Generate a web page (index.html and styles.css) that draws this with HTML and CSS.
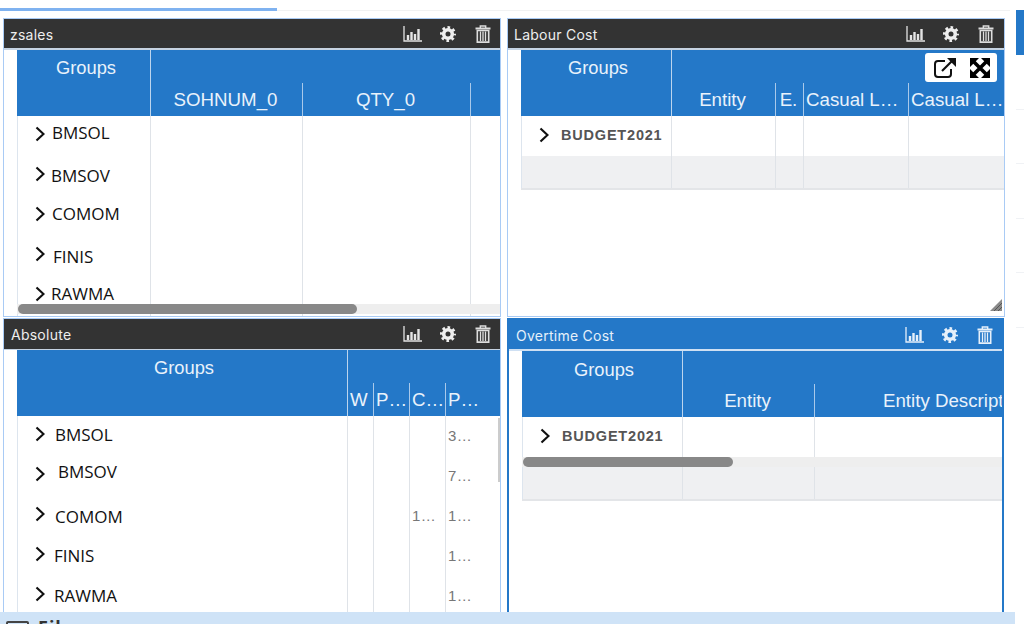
FILE: index.html
```html
<!DOCTYPE html>
<html lang="en">
<head>
<meta charset="utf-8">
<title>Dashboard</title>
<link rel="stylesheet" href="styles.css">
</head>
<body>
<svg class="defs" width="0" height="0" aria-hidden="true">
  <symbol id="chart" viewBox="0 0 19 16">
    <path d="M1 0v15h18" fill="none" stroke="currentColor" stroke-width="1.300"/>
    <path d="M3.800 9h2.400v5H3.800zM7.300 6h2.400v8H7.300zM10.800 8h2.400v6h-2.400zM14.300 3h2.400v11h-2.400z" fill="currentColor"/>
  </symbol>
  <symbol id="gear" viewBox="0 0 16 16">
    <circle cx="8" cy="8" r="4.300" fill="none" stroke="currentColor" stroke-width="3.600"/>
    <circle cx="8" cy="8" r="6.500" fill="none" stroke="currentColor" stroke-width="3" stroke-dasharray="2.550 2.555" stroke-dashoffset="1.275"/>
  </symbol>
  <symbol id="trash" viewBox="0 0 16 18">
    <path d="M.5 3.500h15" fill="none" stroke="currentColor" stroke-width="2"/>
    <path d="M5.300 3V1h5.400v2" fill="none" stroke="currentColor" stroke-width="1.400"/>
    <path d="M2.300 5.500h11.400v11.600H2.300z" fill="none" stroke="currentColor" stroke-width="1.600"/>
    <path d="M5.500 6.500v9.500M8 6.500v9.500M10.500 6.500v9.500" fill="none" stroke="currentColor" stroke-width="1.300"/>
  </symbol>
  <symbol id="chev" viewBox="0 0 10 16">
    <path d="M1.500 1.500l7 6.500-7 6.500" fill="none" stroke="currentColor" stroke-width="2.200"/>
  </symbol>
</svg>
<div class="shell">
  <main class="main">
    <div class="topbar"><div class="progress"></div></div>
    <div class="board">

      <section class="panel">
        <header class="phead">
          <span class="ptitle">zsales</span>
          <span class="ptools">
            <svg class="i-chart"><use href="#chart"/></svg>
            <svg class="i-gear"><use href="#gear"/></svg>
            <svg class="i-trash"><use href="#trash"/></svg>
          </span>
        </header>
        <div class="tbl t-zsales">
          <div class="hrow">
            <div class="gh gh-zsales">Groups</div>
            <div class="ch">SOHNUM_0</div>
            <div class="ch">QTY_0</div>
            <div class="ch"></div>
          </div>
          <div class="row"><div class="g"><svg class="chev"><use href="#chev"/></svg><span class="lbl o6 x7">BMSOL</span></div><div class="c"></div><div class="c"></div><div class="c"></div></div>
          <div class="row"><div class="g"><svg class="chev"><use href="#chev"/></svg><span class="lbl o9 x6">BMSOV</span></div><div class="c"></div><div class="c"></div><div class="c"></div></div>
          <div class="row"><div class="g"><svg class="chev"><use href="#chev"/></svg><span class="lbl o7 x7">COMOM</span></div><div class="c"></div><div class="c"></div><div class="c"></div></div>
          <div class="row"><div class="g"><svg class="chev"><use href="#chev"/></svg><span class="lbl o10 x8">FINIS</span></div><div class="c"></div><div class="c"></div><div class="c"></div></div>
          <div class="row"><div class="g"><svg class="chev"><use href="#chev"/></svg><span class="lbl o7 x6">RAWMA</span></div><div class="c"></div><div class="c"></div><div class="c"></div></div>
          <div class="hscroll hs-zsales"><div class="thumb th-zsales"></div></div>
        </div>
      </section>

      <section class="panel panel-labour">
        <header class="phead">
          <span class="ptitle">Labour Cost</span>
          <span class="ptools">
            <svg class="i-chart"><use href="#chart"/></svg>
            <svg class="i-gear"><use href="#gear"/></svg>
            <svg class="i-trash"><use href="#trash"/></svg>
          </span>
        </header>
        <div class="tbl t-labour">
          <div class="hrow">
            <div class="gh">Groups</div>
            <div class="ch">Entity</div>
            <div class="ch">E.</div>
            <div class="ch">Casual L…</div>
            <div class="ch">Casual L…</div>
          </div>
          <div class="row"><div class="g"><svg class="chev chev-b"><use href="#chev"/></svg><span class="blbl">BUDGET2021</span></div><div class="c"></div><div class="c"></div><div class="c"></div><div class="c"></div></div>
          <div class="row row-total"><div class="g"></div><div class="c"></div><div class="c"></div><div class="c"></div><div class="c"></div></div>
          <div class="floatbar">
            <svg width="24" height="22" viewBox="0 0 24 22"><path d="M12 4H5a3 3 0 0 0-3 3v10a3 3 0 0 0 3 3h10a3 3 0 0 0 3-3v-5" fill="none" stroke="#111" stroke-width="2"/><path d="M9 14L20 3" fill="none" stroke="#111" stroke-width="2.200"/><path d="M14 1h9v9z" fill="#111"/></svg>
            <svg width="20" height="20" viewBox="0 0 20 20"><path d="M4 4l12 12M16 4L4 16" stroke="#000" stroke-width="3.600"/><path d="M0 0h9L0 9zM20 0v9L11 0zM0 20v-9l9 9zM20 20h-9l9-9z" fill="#000"/></svg>
          </div>
        </div>
        <svg class="grip" width="12" height="12" viewBox="0 0 12 12"><path d="M12 0v12H0z" fill="#8a8a8a"/><path d="M12 4l-8 8M12 8l-4 4" stroke="#555" stroke-width="1"/></svg>
      </section>

      <section class="panel panel-tight">
        <header class="phead">
          <span class="ptitle">Absolute</span>
          <span class="ptools">
            <svg class="i-chart"><use href="#chart"/></svg>
            <svg class="i-gear"><use href="#gear"/></svg>
            <svg class="i-trash"><use href="#trash"/></svg>
          </span>
        </header>
        <div class="tbl t-absolute">
          <div class="hrow">
            <div class="gh">Groups</div>
            <div class="ch ch-n">W</div>
            <div class="ch ch-n">P…</div>
            <div class="ch ch-n">C…</div>
            <div class="ch ch-n">P…</div>
          </div>
          <div class="row"><div class="g"><svg class="chev"><use href="#chev"/></svg><span class="lbl o8 x10">BMSOL</span></div><div class="c"></div><div class="c"></div><div class="c"></div><div class="c v">3…</div></div>
          <div class="row"><div class="g"><svg class="chev"><use href="#chev"/></svg><span class="lbl o5 x13">BMSOV</span></div><div class="c"></div><div class="c"></div><div class="c"></div><div class="c v">7…</div></div>
          <div class="row"><div class="g"><svg class="chev"><use href="#chev"/></svg><span class="lbl o10 x10">COMOM</span></div><div class="c"></div><div class="c"></div><div class="c v">1…</div><div class="c v">1…</div></div>
          <div class="row"><div class="g"><svg class="chev"><use href="#chev"/></svg><span class="lbl o9 x9">FINIS</span></div><div class="c"></div><div class="c"></div><div class="c"></div><div class="c v">1…</div></div>
          <div class="row"><div class="g"><svg class="chev"><use href="#chev"/></svg><span class="lbl o9 x9">RAWMA</span></div><div class="c"></div><div class="c"></div><div class="c"></div><div class="c v">1…</div></div>
          <div class="vscroll"></div>
        </div>
      </section>

      <section class="panel panel-active">
        <header class="phead">
          <span class="ptitle">Overtime Cost</span>
          <span class="ptools">
            <svg class="i-chart"><use href="#chart"/></svg>
            <svg class="i-gear"><use href="#gear"/></svg>
            <svg class="i-trash"><use href="#trash"/></svg>
          </span>
        </header>
        <div class="tbl t-overtime">
          <div class="hrow">
            <div class="gh">Groups</div>
            <div class="ch">Entity</div>
            <div class="ch ch-clip">Entity Description</div>
          </div>
          <div class="row"><div class="g"><svg class="chev chev-b"><use href="#chev"/></svg><span class="blbl">BUDGET2021</span></div><div class="c"></div><div class="c"></div></div>
          <div class="row row-total"><div class="g"></div><div class="c"></div><div class="c"></div></div>
          <div class="hscroll hs-overtime"><div class="thumb th-overtime"></div></div>
        </div>
      </section>

    </div>
    <footer class="footer">
      <span class="fbox"></span>
      <span class="ftext">Fil</span>
    </footer>
  </main>
  <aside class="rail">
    <div class="rail-on"></div>
    <div class="rail-item"></div>
    <div class="rail-item"></div>
    <div class="rail-item"></div>
    <div class="rail-item"></div>
    <div class="rail-item"></div>
  </aside>
</div>
</body>
</html>
```

FILE: styles.css
```css
* { box-sizing: border-box; }
html, body { margin: 0; height: 100%; background: #fff; overflow: hidden; }
.defs { display: block; height: 0; }

.shell { display: flex; width: 1024px; height: 624px; }
.main { width: 1015px; height: 624px; display: flex; flex-direction: column; }

.topbar {
  height: 18px;
  flex: none;
  padding-top: 8px;
  background: linear-gradient(#fff 10px, #f1f2f3 10px, #f1f2f3 11px, #fff 11px) no-repeat 0 0 / 1010px 18px;
}
.progress { width: 277px; height: 3px; background: #7fb2f0; }

.board {
  flex: none;
  height: 594px;
  padding-left: 3px;
  display: grid;
  grid-template-columns: 498px 498px;
  grid-template-rows: 299px 294px;
  column-gap: 6px;
  row-gap: 1px;
}

.panel {
  position: relative;
  overflow: hidden;
  border: 1px solid #a9cbf5;
  background: #fff;
  display: flex;
  flex-direction: column;
}
.panel-tight { border-bottom: 0; }

.phead {
  flex: none;
  height: 31px;
  background: #333;
  border-bottom: 2px solid #c6d3e2;
  color: #eee;
  display: flex;
  align-items: center;
  justify-content: space-between;
  padding-left: 6px;
}
.panel-tight .phead { height: 31px; border-bottom-width: 1px; padding-left: 7px; }
.panel-active {
  border: 2px solid #2478c8;
  border-top: 0;
  border-bottom: 0;
  margin-right: 1px;
}
.panel-active .phead {
  background: #2478c8;
  height: 33px;
  color: #e6f0fa;
  border-bottom-color: #cfe0f3;
  padding: 2px 0 0 7px;
}
.ptitle { font: 400 14px/1 Inter, "Liberation Sans", sans-serif; letter-spacing: .25px; margin-top: 2px; }
.ptools { display: flex; align-items: center; padding-right: 9px; }
.panel-labour .ptools { padding-right: 10px; }
.i-chart { width: 19px; height: 16px; margin-right: 18px; color: #e4e4e4; }
.i-gear { width: 16px; height: 16px; margin-right: 19px; }
.i-trash { width: 16px; height: 18px; color: #ddd; }
.panel-active .ptools { padding-right: 9px; }
.panel-active .i-chart { color: #e6f0fa; }
.panel-active .i-trash { color: #e6f0fa; }

.tbl {
  position: relative;
  flex: 1;
  min-height: 0;
  margin-left: 13px;
  overflow: hidden;
}
.t-zsales { --cols: 134px 152px 168px 28px; }
.t-labour { --cols: 151px 104px 28px 105px 95px; }
.t-absolute { --cols: 331px 26px 36px 36px 53px; }
.t-overtime { --cols: 161px 132px 187px; }

.hrow, .row { display: grid; grid-template-columns: var(--cols); }
.hrow { height: 66px; background: #2478c8; color: #e9f2fb; font: 400 18.700px/1 "Liberation Sans", Arial, sans-serif; }
.gh {
  text-align: center;
  font-size: 18.300px;
  padding: 9px 0 0 4px;
  border-right: 1px solid #bcd5ee;
}
.gh-zsales { padding-left: 5px; }
.t-overtime .gh { padding-top: 10px; }
.ch {
  margin-top: 33px;
  height: 33px;
  line-height: 34px;
  text-align: center;
  white-space: nowrap;
  overflow: hidden;
  padding-right: 2px;
  border-right: 1px solid #a9c9ea;
}
.ch-n { text-align: left; padding: 0 0 0 2px; }
.ch-clip { text-align: left; padding: 0 0 0 68px; border-right: 0; }
.t-labour .ch:nth-child(n+4) { text-align: left; padding: 0 0 0 2px; }
.t-labour .ch:last-child, .t-absolute .ch:last-child, .t-zsales .ch:last-child { border-right: 0; }

.row { height: 40px; background: #fff; }
.row-total { height: 34px; background: #eff0f2; border-bottom: 2px solid #e3e5e8; }
.t-overtime .row-total { height: 44px; }
.g {
  display: flex;
  align-items: flex-start;
  padding-left: 17px;
  border-left: 1px solid #dde5ee;
  border-right: 1px solid #dfe3e8;
}
.c { border-right: 1px solid #dfe3e8; }
.c:last-child { border-right: 0; }
.v {
  padding: 11px 0 0 2px;
  color: #777;
  font: 400 15px/18px "Liberation Sans", Arial, sans-serif;
  letter-spacing: .5px;
  white-space: nowrap;
  overflow: hidden;
}

.chev { width: 10px; height: 16px; flex: none; margin-top: 10px; color: #111; }
.chev-b { margin-top: 11px; }
.lbl { font: 400 17px/20px "Open Sans", sans-serif; color: #111; white-space: nowrap; padding-top: 1px; }
.blbl {
  font: 700 14.500px/20px "Liberation Sans", Arial, sans-serif;
  letter-spacing: .8px;
  color: #555;
  margin: 9px 0 0 12px;
  white-space: nowrap;
}
.o5 { margin-top: 5px; }
.o6 { margin-top: 6px; }
.o7 { margin-top: 7px; }
.o8 { margin-top: 8px; }
.o9 { margin-top: 9px; }
.o10 { margin-top: 10px; }
.x6 { margin-left: 6px; }
.x7 { margin-left: 7px; }
.x8 { margin-left: 8px; }
.x9 { margin-left: 9px; }
.x10 { margin-left: 10px; }
.x13 { margin-left: 13px; }

.hscroll { position: absolute; left: 0; right: 0; height: 10px; background: #eee; }
.thumb { height: 10px; background: #888; border-radius: 5px; margin-left: 1px; }
.hs-zsales { top: 254px; }
.th-zsales { width: 339px; }
.hs-overtime { top: 106px; }
.th-overtime { width: 210px; }
.vscroll { position: absolute; right: 0; top: 68px; width: 2px; height: 64px; background: #ccc; }

.floatbar {
  position: absolute;
  top: 3px;
  right: 7px;
  width: 72px;
  height: 29px;
  background: #fff;
  border-radius: 3px;
  display: flex;
  align-items: center;
  justify-content: space-between;
  padding: 0 7px 0 8px;
}
.grip { position: absolute; right: 2px; bottom: 5px; }

.footer {
  flex: none;
  height: 12px;
  background: #cfe3f7;
  overflow: hidden;
  display: flex;
  align-items: flex-start;
  padding-left: 6px;
}
.fbox { width: 23px; height: 14px; margin-top: 9px; border: 2px solid #444; border-radius: 2px; }
.ftext { margin: 5px 0 0 9px; font: 700 18px/20px "Open Sans", sans-serif; color: #333; letter-spacing: 1px; }

.rail { width: 8px; margin: 10px 0 0 1px; }
.rail-on { height: 45px; background: #2478c8; }
.rail-item { height: 54.500px; border-bottom: 1px solid #f0f2f5; }
```
